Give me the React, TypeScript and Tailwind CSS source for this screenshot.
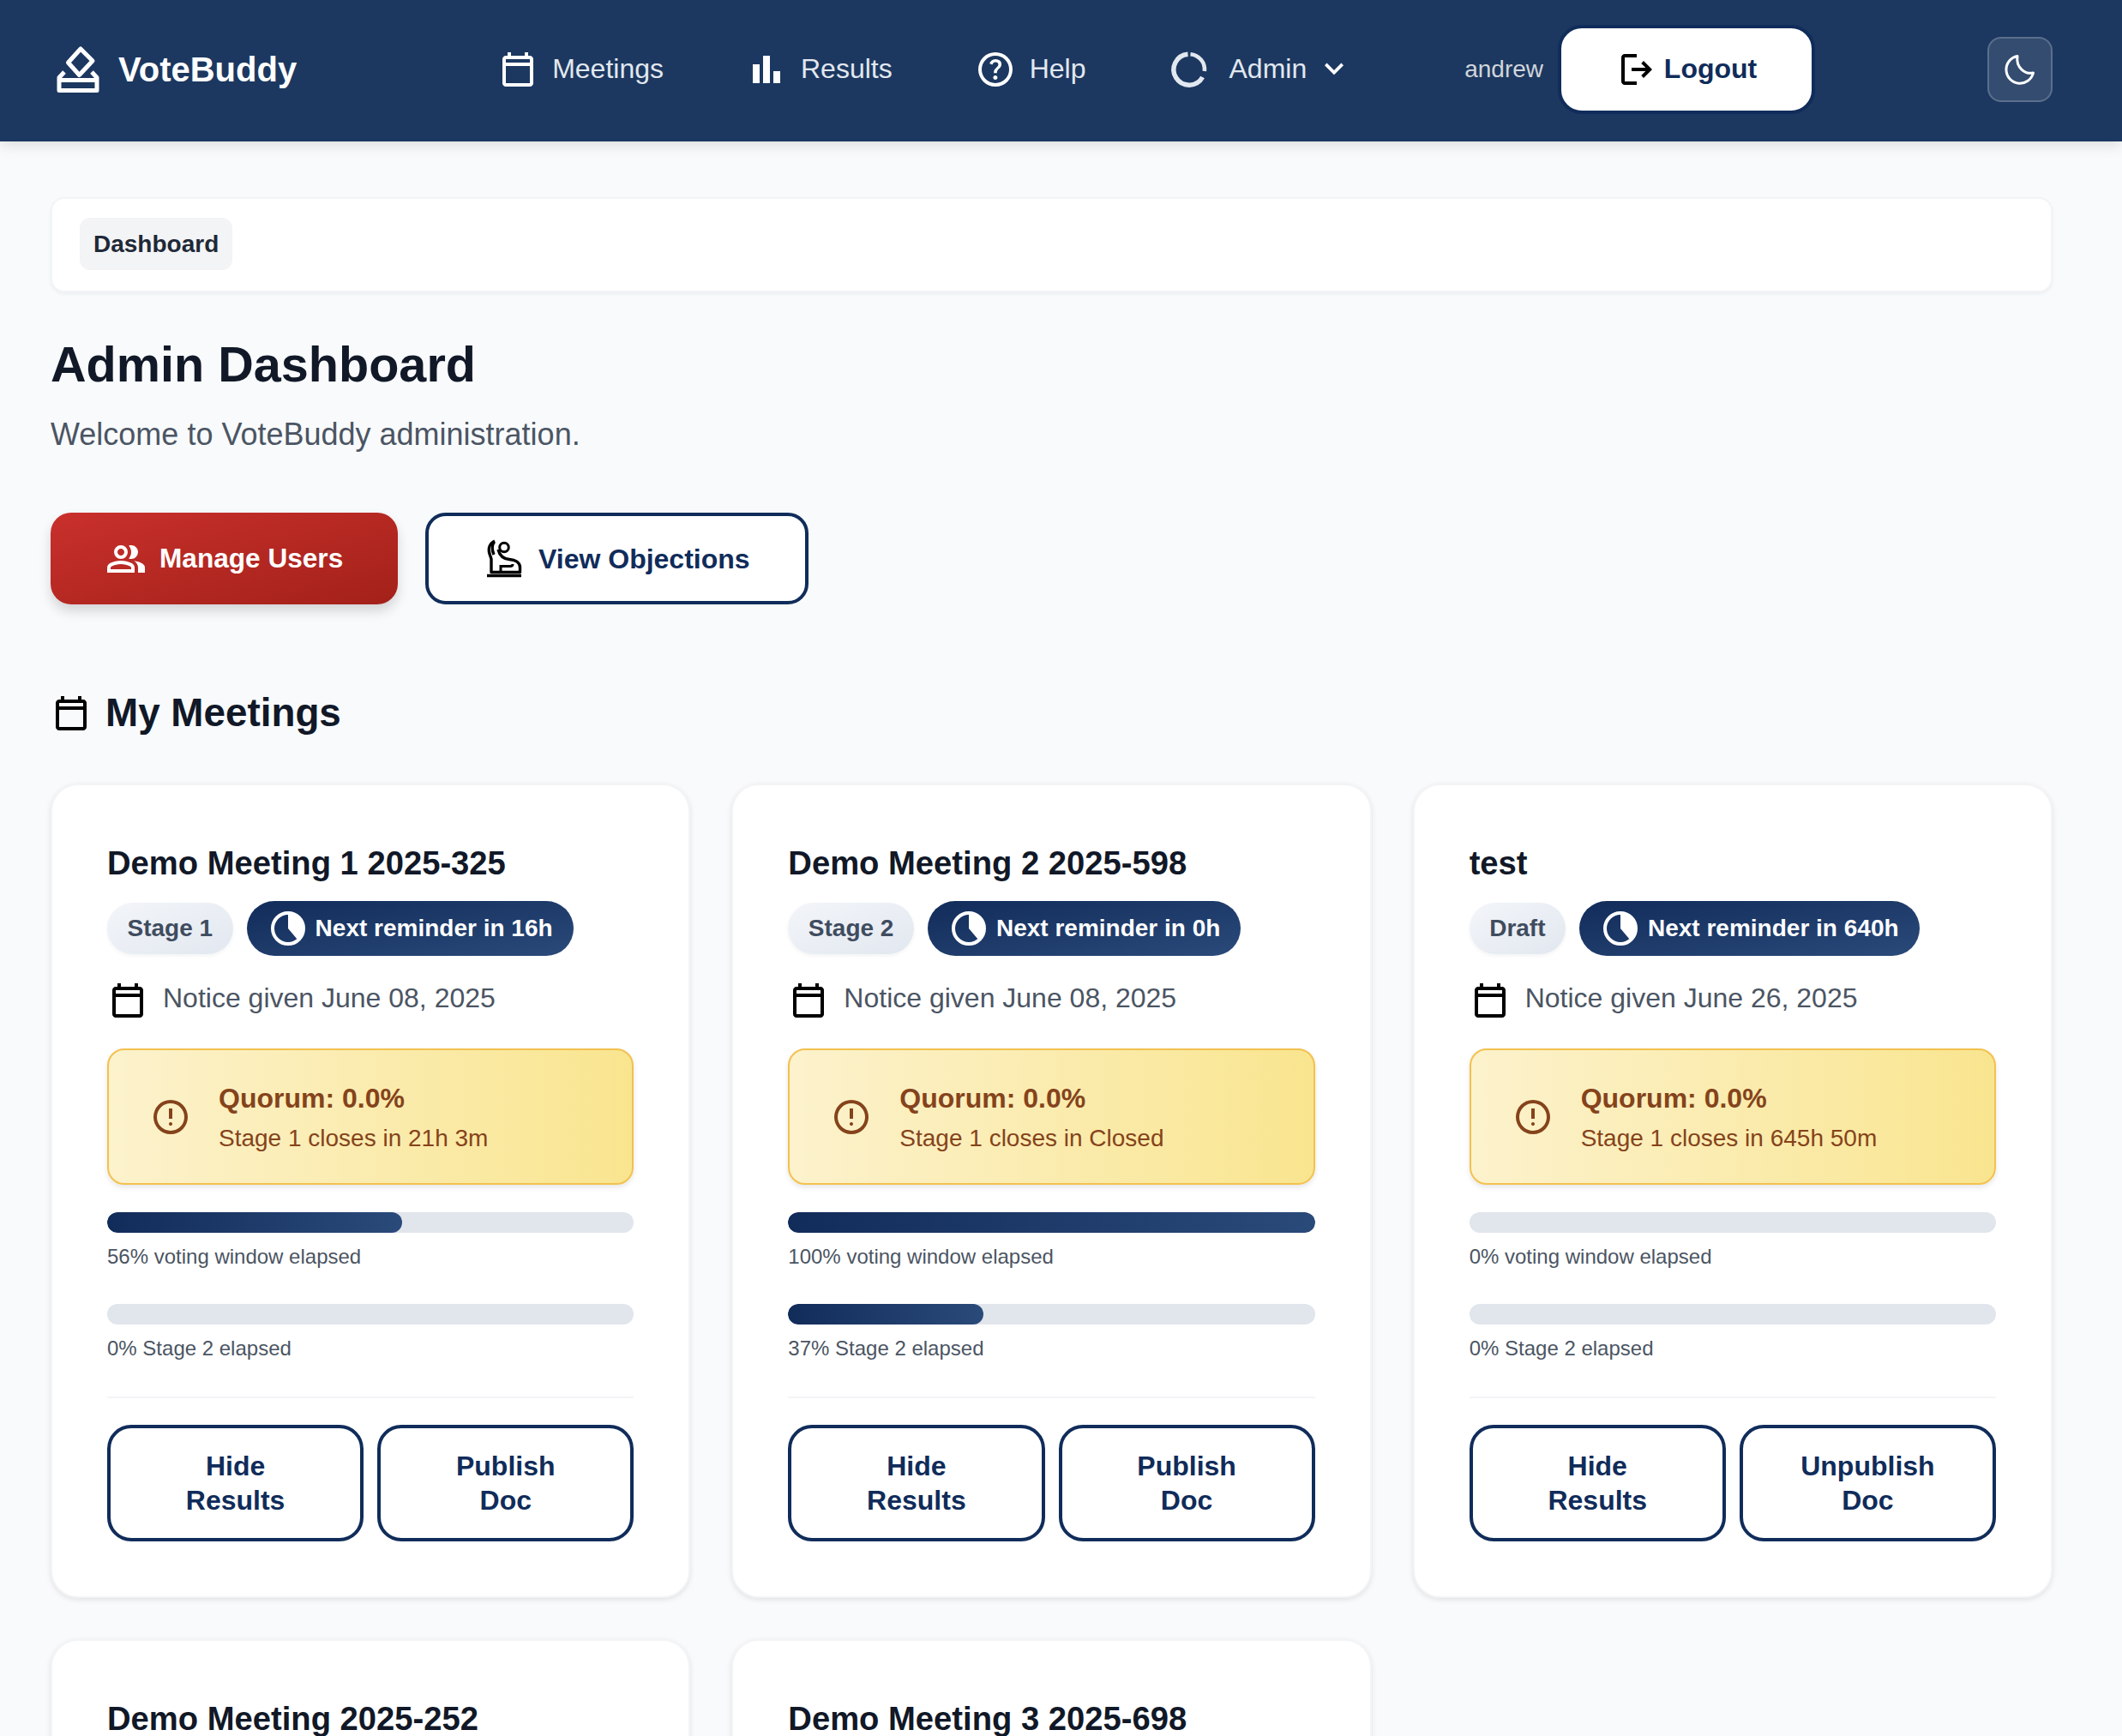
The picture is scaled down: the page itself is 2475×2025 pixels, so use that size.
type Meeting = {
  title: string
  stage: string
  reminder: string
  notice: string
  closes: string
  voting: number
  stageTwo: number
  docLabel: string
}

const meetings: Meeting[] = [
  { title: "Demo Meeting 1 2025-325", stage: "Stage 1", reminder: "Next reminder in 16h", notice: "Notice given June 08, 2025", closes: "Stage 1 closes in 21h 3m", voting: 56, stageTwo: 0, docLabel: "Publish Doc" },
  { title: "Demo Meeting 2 2025-598", stage: "Stage 2", reminder: "Next reminder in 0h", notice: "Notice given June 08, 2025", closes: "Stage 1 closes in Closed", voting: 100, stageTwo: 37, docLabel: "Publish Doc" },
  { title: "test", stage: "Draft", reminder: "Next reminder in 640h", notice: "Notice given June 26, 2025", closes: "Stage 1 closes in 645h 50m", voting: 0, stageTwo: 0, docLabel: "Unpublish Doc" },
]

const Sym = ({ d, className = "w-12 h-12 shrink-0" }: { d: string; className?: string }) => (
  <svg viewBox="0 -960 960 960" fill="currentColor" className={className}>
    <path d={d} />
  </svg>
)

const CALENDAR = "M200-80q-33 0-56.5-23.5T120-160v-560q0-33 23.5-56.5T200-800h40v-80h80v80h320v-80h80v80h40q33 0 56.5 23.5T840-720v560q0 33-23.5 56.5T760-80H200Zm0-80h560v-400H200v400Zm0-480h560v-80H200v80Zm0 0v-80 80Z"
const BARS = "M640-160v-280h160v280H640Zm-240 0v-640h160v640H400Zm-240 0v-440h160v440H160Z"
const HELP = "M478-240q21 0 35.5-14.5T528-290q0-21-14.5-35.5T478-340q-21 0-35.5 14.5T428-290q0 21 14.5 35.5T478-240Zm-36-154h74q0-33 7.5-52t42.5-52q26-26 41-49.5t15-56.5q0-56-41-86t-97-30q-57 0-92.5 30T342-618l66 26q5-18 22.5-39t53.5-21q32 0 48 17.5t16 38.5q0 20-12 37.5T506-526q-44 39-54 59t-10 73Zm38 314q-83 0-156-31.5T197-197q-54-54-85.5-127T80-480q0-83 31.5-156T197-763q54-54 127-85.5T480-880q83 0 156 31.5T763-763q54 54 85.5 127T880-480q0 83-31.5 156T763-197q-54 54-127 85.5T480-80Zm0-80q134 0 227-93t93-227q0-134-93-227t-227-93q-134 0-227 93t-93 227q0 134 93 227t227 93Zm0-320Z"
const CHEVRON = "M480-345 240-585l56-56 184 184 184-184 56 56-240 240Z"
const LOGOUT = "M200-120q-33 0-56.5-23.5T120-200v-560q0-33 23.5-56.5T200-840h280v80H200v560h280v80H200Zm440-160-55-58 102-102H360v-80h327L585-622l55-58 200 200-200 200Z"
const GROUP = "M40-160v-112q0-34 17.5-62.5T104-378q62-31 126-46.5T360-440q66 0 130 15.5T616-378q29 15 46.5 43.5T680-272v112H40Zm720 0v-120q0-44-24.5-84.5T666-434q51 6 96 20.5t84 35.5q36 20 55 44.5t19 53.5v120H760ZM360-480q-66 0-113-47t-47-113q0-66 47-113t113-47q66 0 113 47t47 113q0 66-47 113t-113 47Zm400-160q0 66-47 113t-113 47q-11 0-28-2.5t-28-5.5q27-32 41.5-71t14.5-81q0-42-14.5-81T544-792q14-5 28-6.5t28-1.5q66 0 113 47t47 113ZM120-240h480v-32q0-11-5.5-20T580-306q-54-27-109-40.5T360-360q-56 0-111 13.5T140-306q-9 5-14.5 14t-5.5 20v32Zm240-320q33 0 56.5-23.5T440-640q0-33-23.5-56.5T360-720q-33 0-56.5 23.5T280-640q0 33 23.5 56.5T360-560Zm0 320Zm0-400Z"
const ERROR = "M480-280q17 0 28.5-11.5T520-320q0-17-11.5-28.5T480-360q-17 0-28.5 11.5T440-320q0 17 11.5 28.5T480-280Zm-40-160h80v-240h-80v240Zm40 360q-83 0-156-31.5T197-197q-54-54-85.5-127T80-480q0-83 31.5-156T197-763q54-54 127-85.5T480-880q83 0 156 31.5T763-763q54 54 85.5 127T880-480q0 83-31.5 156T763-197q-54 54-127 85.5T480-80Zm0-80q134 0 227-93t93-227q0-134-93-227t-227-93q-134 0-227 93t-93 227q0 134 93 227t227 93Zm0-320Z"

const LogoIcon = () => (
  <svg viewBox="10 0 64 80" fill="none" stroke="currentColor" strokeWidth="5" strokeLinejoin="round" className="w-16 h-20 shrink-0">
    <path d="M44 16 29.5 32 42.5 46.5 58 30Z" />
    <path d="M25 43 19 49.5V64.5H63V49.5L57 43" />
    <path d="M19 52.5H63" />
  </svg>
)

const DonutIcon = () => (
  <svg viewBox="0 0 48 48" fill="none" stroke="currentColor" strokeWidth="5.5" className="w-12 h-12 shrink-0">
    <path d="M25.5 6.2A18 18 0 0 1 41.9 26" strokeWidth="4.6" />
    <path d="M39.6 33A18 18 0 1 1 22.5 6.2" />
  </svg>
)

const MoonIcon = () => (
  <svg viewBox="0 0 48 48" fill="none" stroke="currentColor" strokeWidth="3" strokeLinejoin="round" className="w-12 h-12 shrink-0">
    <path d="M21 8.5A16 16 0 1 0 39.5 28C30 30 19 22 21 8.5Z" />
  </svg>
)

const ObjectionIcon = () => (
  <svg viewBox="0 0 48 48" fill="none" stroke="currentColor" strokeWidth="3.4" className="w-12 h-12 shrink-0">
    <circle cx="24" cy="10.5" r="5.3" strokeWidth="3" />
    <path d="M13 3C7 6 5 12 7 18L9 24V39.5H42.5V34C42.5 28 37 25 30 24.5 24 24 19 21 17 13" strokeLinejoin="round" />
    <path d="M12.5 4C9.5 8 9.5 13 12 19" />
    <path d="M20 39V32.5H31C33 32.5 34 31.5 34 30" strokeWidth="3" />
    <path d="M4 43.5H44" strokeWidth="3.6" />
  </svg>
)

const ClockIcon = () => (
  <svg viewBox="0 0 48 48" className="w-12 h-12 shrink-0">
    <circle cx="24" cy="24" r="18" fill="none" stroke="currentColor" strokeWidth="4" />
    <path d="M24 24V6A18 18 0 0 1 35.6 37.8Z" fill="currentColor" />
  </svg>
)

const NavLink = ({ icon, label, className = "gap-4" }: { icon: React.ReactNode; label: string; className?: string }) => (
  <a className={`flex items-center text-[32px] leading-[48px] text-[#e2e8f0] ${className}`}>
    {icon}
    <span className="-mt-[3px]">{label}</span>
  </a>
)

const Progress = ({ value, label, className = "" }: { value: number; label: string; className?: string }) => (
  <div className={className}>
    <div className="h-6 rounded-xl bg-[#e1e5ec] overflow-hidden">
      <div className="h-full rounded-xl bg-gradient-to-r from-[#122c5a] to-[#2a4a7a]" style={{ width: `${value}%` }} />
    </div>
    <p className="mt-[10px] text-2xl leading-9 text-[#4b5563]">{label}</p>
  </div>
)

const ActionButton = ({ label }: { label: string }) => (
  <button className="flex-1 min-w-0 h-[136px] px-16 rounded-[28px] border-4 border-[#102c5a] bg-white text-[32px] leading-10 font-bold text-[#102c5a]">
    {label}
  </button>
)

const MeetingCard = ({ meeting }: { meeting: Meeting }) => (
  <div className="rounded-[32px] border-2 border-[#f3f4f6] bg-white p-16 shadow-[0_2px_6px_rgba(0,0,0,0.1)]">
    <h3 className="text-[38.2px] leading-[54px] font-bold text-[#111827]">{meeting.title}</h3>
    <div className="mt-[17px] flex items-center gap-4">
      <span className="h-[60px] px-[23.5px] flex items-center rounded-full bg-gradient-to-br from-[#f3f5f9] to-[#e2e8f0] text-[28px] font-bold text-[#3f4c5f] shadow-[0_2px_4px_rgba(0,0,0,0.05)]">
        {meeting.stage}
      </span>
      <span className="h-16 px-6 flex items-center gap-2 rounded-full bg-gradient-to-br from-[#122c5a] to-[#2a4a7a] text-[28px] font-bold text-white">
        <ClockIcon />
        {meeting.reminder}
      </span>
    </div>
    <div className="mt-7 flex items-center gap-4 text-[32px] leading-[48px] text-[#4b5563]">
      <span className="text-black">
        <Sym d={CALENDAR} />
      </span>
      <span className="-mt-[6px] ml-px">{meeting.notice}</span>
    </div>
    <div className="mt-8 h-[159px] pl-12 flex items-center gap-8 rounded-[20px] border-2 border-[#f3c14f] bg-gradient-to-r from-[#fcf2cc] to-[#f9e58f] text-[#85431b] shadow-[0_3px_6px_rgba(0,0,0,0.1)]">
      <Sym d={ERROR} />
      <div className="pt-[3px]">
        <p className="text-[32px] leading-[44px] font-bold">Quorum: 0.0%</p>
        <p className="mt-[3px] text-[28px] leading-[44px]">{meeting.closes}</p>
      </div>
    </div>
    <Progress className="mt-8" value={meeting.voting} label={`${meeting.voting}% voting window elapsed`} />
    <Progress className="mt-[37px]" value={meeting.stageTwo} label={`${meeting.stageTwo}% Stage 2 elapsed`} />
    <div className="mt-[38px] mb-[31px] h-[2px] bg-[#f3f4f6]" />
    <div className="flex gap-4">
      <ActionButton label="Hide Results" />
      <ActionButton label={meeting.docLabel} />
    </div>
  </div>
)

const App = () => {
  return (
    <div className="h-screen overflow-hidden bg-[#f8fafc] font-['Liberation_Sans',sans-serif]">
      <nav className="relative h-[165px] pl-[60px] pr-[81px] pb-[3px] flex items-center bg-[#1c3860] shadow-[0_4px_16px_rgba(0,0,0,0.12)]">
        <div className="flex items-center gap-[14px] text-white">
          <LogoIcon />
          <span className="text-[40px] font-bold">VoteBuddy</span>
        </div>
        <div className="ml-[234px] flex items-center gap-24">
          <NavLink icon={<Sym d={CALENDAR} className="w-12 h-12 shrink-0 text-white" />} label="Meetings" />
          <NavLink icon={<Sym d={BARS} className="w-12 h-12 shrink-0 text-white" />} label="Results" />
          <NavLink icon={<Sym d={HELP} className="w-12 h-12 shrink-0 text-white" />} label="Help" />
          <div className="flex items-center gap-[10px] text-white">
            <NavLink className="gap-[23px]" icon={<DonutIcon />} label="Admin" />
            <Sym d={CHEVRON} className="w-11 h-11 shrink-0" />
          </div>
        </div>
        <span className="ml-[130px] text-[28px] text-[#d1d5db]">andrew</span>
        <button className="ml-[17px] w-[300px] h-[104px] flex items-center justify-center gap-2 rounded-[28px] border-4 border-[#102c5a] bg-white text-[32px] font-bold text-[#102c5a]">
          <span className="text-black">
            <Sym d={LOGOUT} />
          </span>
          <span className="-mt-[2px]">Logout</span>
        </button>
        <button className="ml-auto w-[76px] h-[76px] flex items-center justify-center rounded-2xl border-2 border-white/20 bg-white/10 text-white">
          <MoonIcon />
        </button>
      </nav>

      <main className="pl-[59px] pr-[81px] pt-[65px]">
        <div className="h-[111px] pl-[32px] pb-[2px] flex items-center rounded-2xl border-2 border-[#f3f4f6] bg-white shadow-[0_2px_4px_rgba(0,0,0,0.05)]">
          <span className="h-[61px] px-4 flex items-center rounded-xl bg-[#f3f4f6] text-[28px] font-bold text-[#1f2937]">Dashboard</span>
        </div>

        <h1 className="mt-[50px] text-[57.6px] leading-[69px] font-bold text-[#111827]">Admin Dashboard</h1>
        <p className="mt-[19px] text-[36px] leading-[55px] text-[#4b5563]">Welcome to VoteBuddy administration.</p>

        <div className="mt-16 flex gap-8">
          <button className="h-[107px] w-[405px] pl-16 flex items-center gap-[15px] rounded-3xl bg-gradient-to-br from-[#c9302c] to-[#a32119] text-[31.6px] font-bold text-white shadow-[0_8px_14px_rgba(0,0,0,0.15)]">
            <Sym d={GROUP} />
            Manage Users
          </button>
          <button className="h-[107px] px-16 flex items-center gap-4 rounded-3xl border-4 border-[#102c5a] bg-white text-[32px] font-bold text-[#102c5a]">
            <span className="text-black">
              <ObjectionIcon />
            </span>
            View Objections
          </button>
        </div>

        <div className="mt-[99px] flex items-center gap-4">
          <span className="text-black">
            <Sym d={CALENDAR} />
          </span>
          <h2 className="text-[45.8px] leading-[55px] font-bold text-[#111827]">My Meetings</h2>
        </div>

        <div className="mt-[55px] grid grid-cols-3 gap-12">
          {meetings.map((meeting) => (
            <MeetingCard key={meeting.title} meeting={meeting} />
          ))}
          <div className="min-h-[951px] rounded-[32px] border-2 border-[#f3f4f6] bg-white p-16 shadow-[0_2px_6px_rgba(0,0,0,0.1)]">
            <h3 className="text-[38.2px] leading-[54px] font-bold text-[#111827]">Demo Meeting 2025-252</h3>
          </div>
          <div className="min-h-[951px] rounded-[32px] border-2 border-[#f3f4f6] bg-white p-16 shadow-[0_2px_6px_rgba(0,0,0,0.1)]">
            <h3 className="text-[38.2px] leading-[54px] font-bold text-[#111827]">Demo Meeting 3 2025-698</h3>
          </div>
        </div>
      </main>
    </div>
  )
}

export default App
